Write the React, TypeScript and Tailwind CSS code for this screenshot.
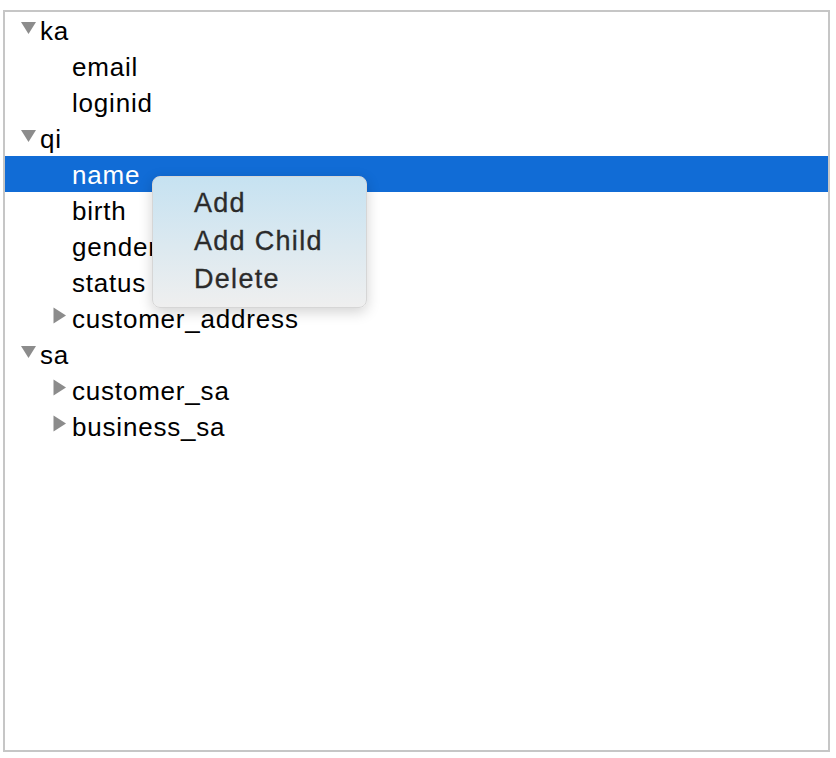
import React from "react";

type Node = {
  label: string;
  level: number;
  toggle?: "open" | "closed";
  selected?: boolean;
};

const rows: Node[] = [
  { label: "ka", level: 0, toggle: "open" },
  { label: "email", level: 1 },
  { label: "loginid", level: 1 },
  { label: "qi", level: 0, toggle: "open" },
  { label: "name", level: 1, selected: true },
  { label: "birth", level: 1 },
  { label: "gender", level: 1 },
  { label: "status", level: 1 },
  { label: "customer_address", level: 1, toggle: "closed" },
  { label: "sa", level: 0, toggle: "open" },
  { label: "customer_sa", level: 1, toggle: "closed" },
  { label: "business_sa", level: 1, toggle: "closed" },
];

const Toggle = ({ state }: { state?: "open" | "closed" }) => {
  if (!state) return <span className="w-[17px] shrink-0" />;
  return (
    <svg width="17" height="17" viewBox="0 0 17 17" className="shrink-0 -mt-[6px]">
      {state === "open" ? (
        <polygon points="1,3 16,3 8.5,15" fill="#8c8c8c" />
      ) : (
        <polygon points="1.5,0.5 14,8.5 1.5,16.5" fill="#8c8c8c" />
      )}
    </svg>
  );
};

export default function App() {
  return (
    <div className="h-[758px] w-[836px] bg-white pl-[3px] pt-[10px]">
      <div
        className="relative h-[742px] w-[827px] border-2 border-[#c6c6c6] bg-white"
        style={{ fontFamily: '"Liberation Sans", Arial, sans-serif' }}
      >
        {/* Tree */}
        <div className="flex flex-col">
          {rows.map((r, i) => (
            <div
              key={i}
              className={`flex h-[36px] items-center text-[26px] leading-none tracking-[0.8px] ${
                r.selected ? "bg-[#116cd6] text-white" : "text-black"
              } ${r.level === 0 ? "pl-[15px]" : "pl-[47px]"}`}
            >
              <Toggle state={r.toggle} />
              <span className="ml-[3px] pt-[2px]">{r.label}</span>
            </div>
          ))}
        </div>

        {/* Context menu */}
        <div className="absolute left-[147px] top-[164px] w-[215px] rounded-[8px] border border-[#d6d6d6] bg-gradient-to-b from-[#c6e2f1] to-[#efefef] pt-[7px] pb-[9px] shadow-[0_4px_14px_rgba(0,0,0,0.18)]">
          {["Add", "Add Child", "Delete"].map((item) => (
            <div
              key={item}
              className="flex h-[38px] items-center pl-[41px] text-[27px] leading-none tracking-[1.3px] text-[#2b2b2b] [-webkit-text-stroke:0.3px_#2b2b2b]"
            >
              {item}
            </div>
          ))}
        </div>
      </div>
    </div>
  );
}
